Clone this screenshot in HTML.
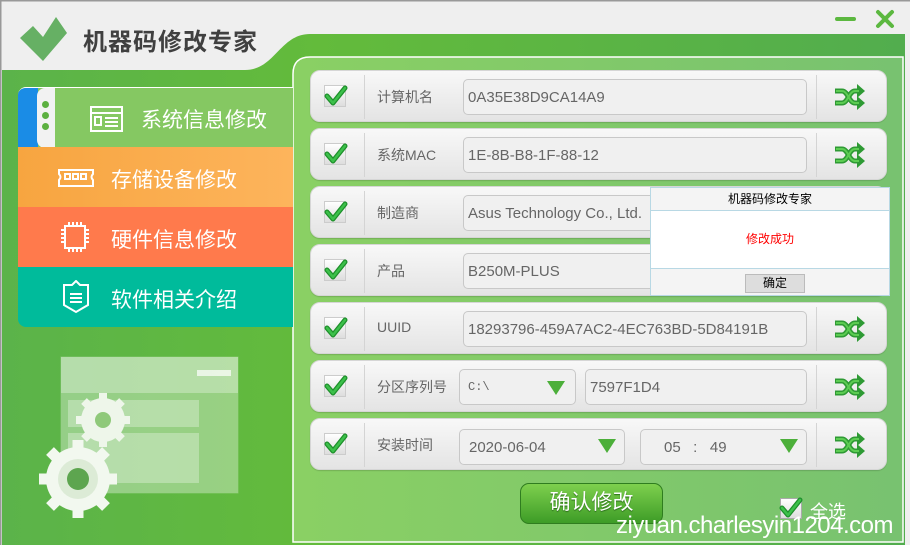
<!DOCTYPE html>
<html><head><meta charset="utf-8"><style>
*{margin:0;padding:0;box-sizing:border-box}
body{width:910px;height:545px;overflow:hidden;background:#efefef;font-family:"Liberation Sans","Noto Sans CJK SC",sans-serif;position:relative}
.abs{position:absolute}
.row{position:absolute;left:310px;width:577px;height:52px;border-radius:10px;background:linear-gradient(#f8f8f8,#e4e4e4);border:1px solid #d6d6d6;box-shadow:0 1px 1px rgba(0,0,0,.15)}
.row .cb{position:absolute;left:13px;top:14px;width:22px;height:22px;background:linear-gradient(#fff,#ddd);border:1px solid #ccc}
.row .d1{position:absolute;left:53px;top:4px;width:1px;height:44px;background:#d4d4d4}
.row .d2{position:absolute;left:505px;top:4px;width:1px;height:44px;background:#d4d4d4}
.row .lb{position:absolute;left:66px;top:16px;font-size:14px;color:#666}
.inp{position:absolute;top:8px;height:36px;border:1px solid #c8c8c8;border-radius:5px;background:#f0f0f0;font-size:15px;color:#666;line-height:35px;padding-left:4px;white-space:nowrap;overflow:hidden}
.tri{position:absolute;top:13px;width:0;height:0;border-left:9px solid transparent;border-right:9px solid transparent;border-top:14px solid #4caf3a}
.menu{position:absolute;left:18px;width:275px;height:60px;color:#fff;font-size:21px}
</style></head><body>
<svg class="abs" style="left:0;top:0" width="910" height="545">
<defs><linearGradient id="g1" x1="0" x2="1"><stop offset="0" stop-color="#5bb34a"/><stop offset=".35" stop-color="#63bb3b"/><stop offset="1" stop-color="#52ad4e"/></linearGradient>
<linearGradient id="g2" x1="0" x2="1"><stop offset="0" stop-color="#8ad064"/><stop offset="1" stop-color="#78c270"/></linearGradient></defs>
<path d="M2 70 L245 70 C275 70 280 34 310 34 L905 34 L905 545 L2 545 Z" fill="url(#g1)"/>
<path d="M293 542 L293 74 Q293 57 310 57 L903 57 L903 542 Z" fill="url(#g2)" stroke="#fff" stroke-width="1.5"/>
<rect x="0" y="0" width="910" height="1.5" fill="#999"/>
<rect x="0" y="0" width="1.5" height="545" fill="#999"/>
<path d="M20 38 L33 26 L43 37 L56 17 L67 33 L43 61 Z" fill="#66b064"/>
<path d="M837 19 H854" stroke="#5cb840" stroke-width="4" stroke-linecap="round"/>
<path d="M878 12 L892 26 M892 12 L878 26" stroke="#5cb840" stroke-width="4" stroke-linecap="round"/>
<rect x="61" y="357" width="177" height="136" fill="#fff" opacity=".35" stroke="#fff" stroke-opacity=".6"/>
<rect x="61" y="357" width="177" height="36" fill="#fff" opacity=".3"/>
<rect x="197" y="370" width="34" height="6" fill="#fff" opacity=".7"/>
<rect x="68" y="400" width="131" height="27" fill="#fff" opacity=".3"/>
<rect x="68" y="433" width="131" height="50" fill="#fff" opacity=".3"/>
<g fill="#eef6ea"><circle cx="103" cy="420" r="22"/><g stroke="#eef6ea" stroke-width="8">
<path d="M103 393 V447 M76 420 H130 M84 401 L122 439 M122 401 L84 439"/></g></g>
<circle cx="103" cy="420" r="8" fill="#8fc97a"/>
<g fill="#f2f8ef"><circle cx="78" cy="479" r="32"/><g stroke="#f2f8ef" stroke-width="11"><path d="M78 440 V518 M39 479 H117 M50 451 L106 507 M106 451 L50 507"/></g></g>
<circle cx="78" cy="479" r="20" fill="#dcebd6"/><circle cx="78" cy="479" r="11" fill="#5da54f"/>
</svg>
<div class="abs" style="left:83px;top:22px;font-size:24px;font-weight:bold;color:#404040;letter-spacing:1px;font-family:'Noto Sans CJK SC',sans-serif">机器码修改专家</div>

<div class="menu" style="top:87px;height:60px;background:#85c862;border-radius:8px 0 0 0;overflow:hidden;border-top:1px solid #fff">
<div class="abs" style="left:0;top:0;width:20px;height:60px;background:#1a8ce6"></div>
<div class="abs" style="left:19px;top:0;width:18px;height:60px;background:#f2f2f2;border-radius:8px 0 0 8px"></div>
<div class="abs" style="left:24px;top:13px;width:7px;height:7px;border-radius:50%;background:#5cb040;box-shadow:0 11px 0 #5cb040,0 22px 0 #5cb040"></div>
<svg class="abs" style="left:72px;top:18px" width="34" height="26"><g fill="none" stroke="#fff" stroke-width="2"><rect x="1" y="1" width="31" height="24"/><path d="M1 7 H32 M5 11 H11 V19 H5Z M15 12 H28 M15 16 H28 M15 20 H28"/></g></svg>
<div class="abs" style="left:123px;top:16px">系统信息修改</div></div>
<div class="menu" style="top:147px;background:linear-gradient(90deg,#f7a540,#fdb45c)"><svg class="abs" style="left:40px;top:22px" width="36" height="18"><g fill="none" stroke="#fff" stroke-width="2"><path d="M1 1 H35 V5 Q32 8 35 11 V17 H1 V11 Q4 8 1 5Z"/><rect x="7" y="5" width="5" height="5"/><rect x="15" y="5" width="5" height="5"/><rect x="23" y="5" width="5" height="5"/></g></svg><div class="abs" style="left:93px;top:17px">存储设备修改</div></div>
<div class="menu" style="top:207px;background:#ff7a4c"><svg class="abs" style="left:42px;top:14px" width="30" height="32"><g fill="none" stroke="#fff" stroke-width="2"><rect x="5" y="5" width="20" height="22"/><path d="M9 1V5M13 1V5M17 1V5M21 1V5M9 27V31M13 27V31M17 27V31M21 27V31M1 9H5M1 13H5M1 17H5M1 21H5M25 9H29M25 13H29M25 17H29M25 21H29"/></g></svg><div class="abs" style="left:93px;top:17px">硬件信息修改</div></div>
<div class="menu" style="top:267px;background:#00bb9b;border-radius:0 0 0 8px"><svg class="abs" style="left:44px;top:13px" width="28" height="34"><g fill="none" stroke="#fff" stroke-width="2"><path d="M14 1 L18 5 H26 V25 L14 32 L2 25 V5 H10Z"/><path d="M8 14H20M8 18H20M8 22H20"/></g></svg><div class="abs" style="left:93px;top:17px">软件相关介绍</div></div>

<div class="row" style="top:70px"><div class="cb"></div><div class="d1"></div><div class="lb">计算机名</div><div class="inp" style="left:152px;width:344px">0A35E38D9CA14A9</div><div class="d2"></div></div>
<div class="row" style="top:128px"><div class="cb"></div><div class="d1"></div><div class="lb">系统MAC</div><div class="inp" style="left:152px;width:344px">1E-8B-B8-1F-88-12</div><div class="d2"></div></div>
<div class="row" style="top:186px"><div class="cb"></div><div class="d1"></div><div class="lb">制造商</div><div class="inp" style="left:152px;width:344px">Asus Technology Co., Ltd.</div><div class="d2"></div></div>
<div class="row" style="top:244px"><div class="cb"></div><div class="d1"></div><div class="lb">产品</div><div class="inp" style="left:152px;width:344px">B250M-PLUS</div><div class="d2"></div></div>
<div class="row" style="top:302px"><div class="cb"></div><div class="d1"></div><div class="lb">UUID</div><div class="inp" style="left:152px;width:344px">18293796-459A7AC2-4EC763BD-5D84191B</div><div class="d2"></div></div>
<div class="row" style="top:360px"><div class="cb"></div><div class="d1"></div><div class="lb">分区序列号</div><div class="inp" style="left:148px;width:117px;font-size:12px;font-family:'Liberation Mono',monospace;padding-left:8px">C:\</div><div class="tri" style="left:236px;top:20px"></div><div class="inp" style="left:274px;width:222px">7597F1D4</div><div class="d2"></div></div>
<div class="row" style="top:418px"><div class="cb"></div><div class="d1"></div><div class="lb">安装时间</div><div class="inp" style="left:148px;width:166px;padding-left:9px;top:10px">2020-06-04</div><div class="tri" style="left:287px;top:20px"></div><div class="inp" style="left:329px;width:167px;padding-left:23px;top:10px">05 &nbsp;&nbsp;: &nbsp;&nbsp;49</div><div class="tri" style="left:469px;top:20px"></div><div class="d2"></div></div>

<svg class="abs" style="left:0;top:0;pointer-events:none" width="910" height="545">
<defs><g id="ck"><path d="M3 12 L9 19 L21 4" fill="none" stroke="#1d8f2a" stroke-width="5" stroke-linecap="round" stroke-linejoin="round"/><path d="M3 12 L9 19 L21 4" fill="none" stroke="#3cc04a" stroke-width="2.5" stroke-linecap="round" stroke-linejoin="round"/></g>
<g id="sh"><g fill="none" stroke="#2e9a34" stroke-width="5" stroke-linejoin="round"><path d="M1 8 H8 C14 8 15 20 21 20 H25"/><path d="M1 20 H8 C14 20 15 8 21 8 H25"/></g><path d="M23 1 L31 8 L23 15Z M23 13 L31 20 L23 27Z" fill="#2e9a34"/><g fill="none" stroke="#5ccc52" stroke-width="2"><path d="M2 8 H8 C14 8 15 20 21 20 H25"/><path d="M2 20 H8 C14 20 15 8 21 8 H25"/></g></g></defs>
<use href="#ck" x="324" y="84"/><use href="#ck" x="324" y="142"/><use href="#ck" x="324" y="200"/><use href="#ck" x="324" y="258"/><use href="#ck" x="324" y="316"/><use href="#ck" x="324" y="374"/><use href="#ck" x="324" y="432"/>
<use href="#sh" x="834" y="83"/><use href="#sh" x="834" y="141"/><use href="#sh" x="834" y="315"/><use href="#sh" x="834" y="373"/><use href="#sh" x="834" y="431"/>
</svg>

<div class="abs" style="left:650px;top:187px;width:240px;height:109px;background:#fff;border:1px solid #b8d8e4">
<div style="height:23px;background:#f4f4f4;border-bottom:1px solid #b8d8e4;text-align:center;font-size:12px;line-height:23px;color:#000">机器码修改专家</div>
<div style="height:57px;text-align:center;font-size:12px;line-height:56px;color:#f00">修改成功</div>
<div style="height:27px;background:#f4f4f4;border-top:1px solid #b8d8e4;position:relative"><div class="abs" style="left:94px;top:5px;width:60px;height:19px;background:#ddd;border:1px solid #bbb;font-size:12px;text-align:center;line-height:17px">确定</div></div>
</div>

<div class="abs" style="left:520px;top:483px;width:143px;height:41px;border-radius:9px;background:linear-gradient(#7ed04e,#3d9c27);border:1px solid #2f7d1f;color:#fff;font-size:21px;text-align:center;line-height:38px;text-shadow:0 1px 1px #2a6a1a">确认修改</div>
<div class="abs" style="left:780px;top:498px;width:22px;height:21px;background:linear-gradient(#fff,#ddd);border:1px solid #aaa"></div>
<svg class="abs" style="left:779px;top:496px" width="26" height="26"><use href="#ck"/></svg>
<div class="abs" style="left:810px;top:498px;font-size:18px;color:#fff">全选</div>
<div class="abs" style="left:616px;top:512px;font-size:24px;color:#fff;font-family:'Liberation Sans Narrow','Liberation Sans',sans-serif;letter-spacing:-.5px">ziyuan.charlesyin1204.com</div>
</body></html>
